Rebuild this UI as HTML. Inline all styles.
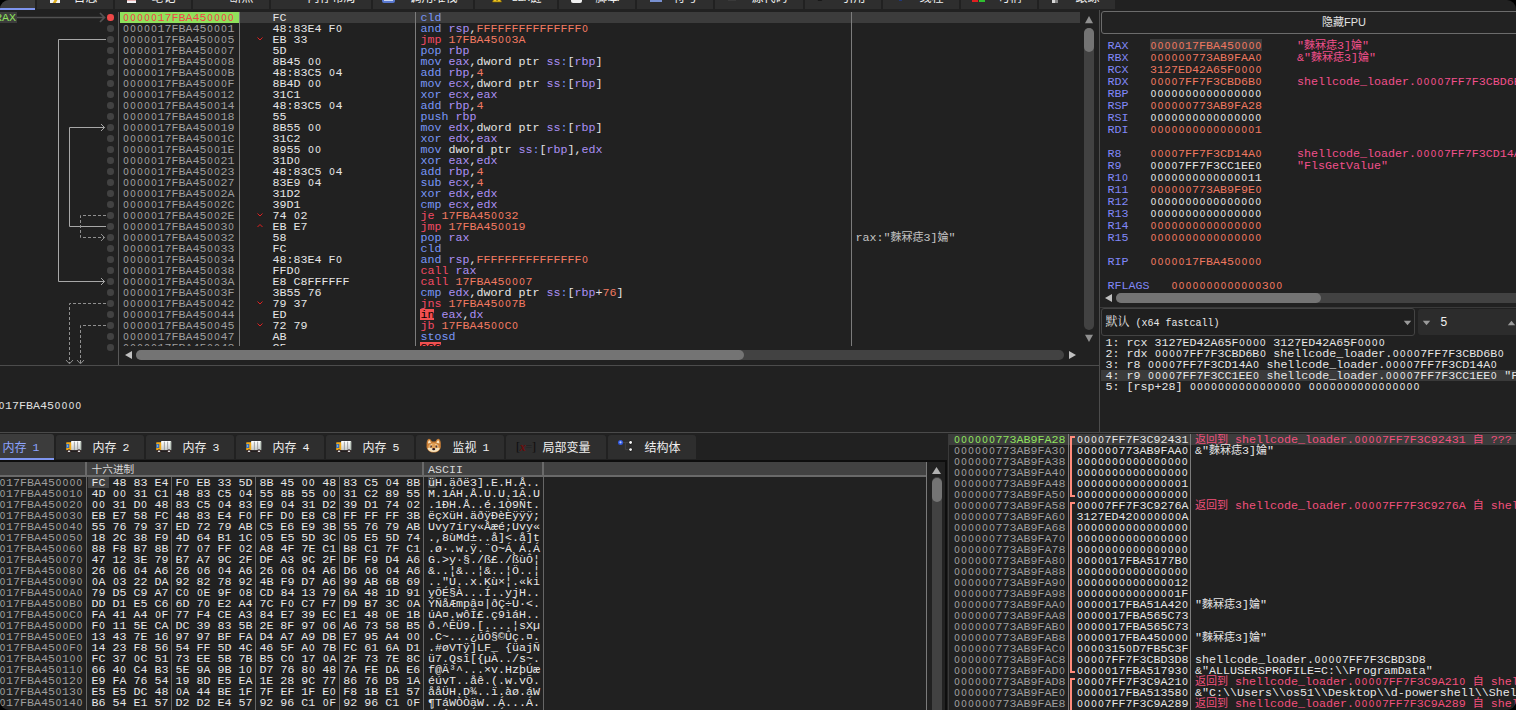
<!DOCTYPE html>
<html lang="zh"><head><meta charset="utf-8"><title>x64dbg</title>
<style>
html,body{margin:0;padding:0;background:#000;}
body{width:1516px;height:710px;overflow:hidden;position:relative;}
#w{position:absolute;left:0;top:0;width:1516px;height:710px;background:#212121;border-radius:9px;overflow:hidden;
 font-family:"Liberation Mono","Noto Sans CJK SC",monospace;font-size:11.667px;line-height:11px;color:#e0e0e0;}
.p{position:absolute;overflow:hidden;}
.t{position:absolute;white-space:pre;height:11px;line-height:11px;}
.r{position:absolute;}
.cj{font-family:"Noto Sans CJK SC",sans-serif;font-size:11px;line-height:0;}
.ui{font-family:"Liberation Sans","Noto Sans CJK SC",sans-serif;font-size:12px;}
.z{font-family:"DejaVu Sans",sans-serif;font-weight:normal;font-size:9.4px;letter-spacing:1.02px;line-height:0;position:relative;left:0.5px;}
.ad{color:#9e9e9e;}
.by{color:#e6e6e6;}
.m{color:#7896f6;} .g{color:#ab90f4;} .c{color:#f27a62;} .j{color:#f24a64;} .w{color:#e4e4e4;}
.bad{color:#000;}
.rn{color:#8088f8;} .rc{color:#f07860;} .ru{color:#e4e4e4;} .rk{color:#f2508c;}
.sk{color:#f2507c;}
.tl{font-family:"Liberation Mono",monospace;font-size:11.5px;letter-spacing:-0.9px;position:relative;top:-1px;}
.tab{position:absolute;background:#2e2e2e;border-radius:3px 3px 0 0;}
</style></head>
<body><div id="w">
<div class="tab" style="left:-60px;top:-16px;width:95px;height:25px;background:#3c3c3c;"></div>
<div class="r" style="left:-60px;top:8px;width:95px;height:2px;background:#7f96f0;"></div>
<div class="tab" style="left:37px;top:-16px;width:76px;height:25px;background:#2e2e2e;"></div>
<div class="t ui" style="left:73.5px;top:-9px;height:14px;line-height:14px;color:#f0f0f0;">日志</div>
<div class="r" style="left:50px;top:-10px;width:10px;height:13px;background:#f4f4f4;"></div>
<div class="r" style="left:54px;top:-1px;width:3px;height:3.5px;background:#e0b020;transform:skewX(-30deg);"></div>
<div class="tab" style="left:115px;top:-16px;width:76px;height:25px;background:#2e2e2e;"></div>
<div class="t ui" style="left:151.5px;top:-9px;height:14px;line-height:14px;color:#f0f0f0;">笔记</div>
<div class="r" style="left:127px;top:-10px;width:9px;height:12.5px;background:#f0f0f4;"></div>
<div class="r" style="left:127px;top:0px;width:9px;height:1px;background:#e8b0b0;"></div>
<div class="tab" style="left:193px;top:-16px;width:76px;height:25px;background:#2e2e2e;"></div>
<div class="t ui" style="left:229.5px;top:-9px;height:14px;line-height:14px;color:#f0f0f0;">断点</div>
<div class="tab" style="left:271px;top:-16px;width:100px;height:25px;background:#2e2e2e;"></div>
<div class="t ui" style="left:307.5px;top:-9px;height:14px;line-height:14px;color:#f0f0f0;">内存布局</div>
<div class="tab" style="left:373px;top:-16px;width:100px;height:25px;background:#2e2e2e;"></div>
<div class="t ui" style="left:409.5px;top:-9px;height:14px;line-height:14px;color:#f0f0f0;">调用堆栈</div>
<div class="r" style="left:382px;top:-8px;width:13px;height:10.5px;background:#5878d0;border-radius:0 0 2px 2px;"></div>
<div class="r" style="left:384px;top:-6px;width:9px;height:6.5px;background:#c8d4f4;"></div>
<div class="tab" style="left:475px;top:-16px;width:82px;height:25px;background:#2e2e2e;"></div>
<div class="t ui" style="left:511.5px;top:-9px;height:14px;line-height:14px;color:#f0f0f0;"><span class="tl">S</span><span class="tl">E</span><span class="tl">H</span>链</div>
<svg class="r" style="left:491.5px;top:-8px" width="10" height="11"><path d="M5 0.5L9.6 10H0.4Z" fill="#f0c820" stroke="#806000" stroke-width="0.7"/><rect x="4.5" y="3.5" width="1.1" height="3.4" fill="#222"/><rect x="4.5" y="7.6" width="1.1" height="1.1" fill="#222"/></svg>
<div class="tab" style="left:559px;top:-16px;width:76px;height:25px;background:#2e2e2e;"></div>
<div class="t ui" style="left:595.5px;top:-9px;height:14px;line-height:14px;color:#f0f0f0;">脚本</div>
<div class="r" style="left:571px;top:-10px;width:11px;height:12.5px;background:#f0f0f0;border-radius:0 0 2px 2px;"></div>
<div class="tab" style="left:637px;top:-16px;width:76px;height:25px;background:#2e2e2e;"></div>
<div class="t ui" style="left:673.5px;top:-9px;height:14px;line-height:14px;color:#f0f0f0;">符号</div>
<div class="r" style="left:649.5px;top:-9px;width:12px;height:10.5px;background:#e8ecf8;border-radius:0 0 2px 2px;"></div>
<div class="r" style="left:649.5px;top:0px;width:12px;height:1.5px;background:#7890d0;"></div>
<div class="tab" style="left:715px;top:-16px;width:88px;height:25px;background:#2e2e2e;"></div>
<div class="t ui" style="left:751.5px;top:-9px;height:14px;line-height:14px;color:#f0f0f0;">源代码</div>
<div class="r" style="left:728px;top:-8px;width:8px;height:9px;background:#3a3a3a;"></div>
<div class="tab" style="left:805px;top:-16px;width:76px;height:25px;background:#2e2e2e;"></div>
<div class="t ui" style="left:841.5px;top:-9px;height:14px;line-height:14px;color:#f0f0f0;">引用</div>
<div class="r" style="left:816px;top:-6px;width:4px;height:6.5px;background:#181818;transform:skewX(30deg);"></div>
<div class="tab" style="left:883px;top:-16px;width:76px;height:25px;background:#2e2e2e;"></div>
<div class="t ui" style="left:919.5px;top:-9px;height:14px;line-height:14px;color:#f0f0f0;">线程</div>
<div class="r" style="left:899px;top:-6px;width:3px;height:6.5px;background:#203878;"></div>
<div class="tab" style="left:961px;top:-16px;width:76px;height:25px;background:#2e2e2e;"></div>
<div class="t ui" style="left:997.5px;top:-9px;height:14px;line-height:14px;color:#f0f0f0;">句柄</div>
<div class="r" style="left:972px;top:-7px;width:6px;height:8.5px;background:#e02020;"></div>
<div class="r" style="left:979px;top:-7px;width:6px;height:8.5px;background:#30c030;"></div>
<div class="tab" style="left:1039px;top:-16px;width:76px;height:25px;background:#2e2e2e;"></div>
<div class="t ui" style="left:1075.5px;top:-9px;height:14px;line-height:14px;color:#f0f0f0;">跟踪</div>
<div class="r" style="left:1052px;top:-8px;width:3px;height:11px;background:#d8d8d8;"></div>
<div class="r" style="left:1055px;top:-2px;width:3px;height:5px;background:#888;"></div>
<div class="p" style="left:0;top:12px;width:1096px;height:334px;">
<div class="r" style="left:240px;top:0px;width:840px;height:11px;background:#3c3c3c;"></div>
<div class="r" style="left:120px;top:0px;width:119px;height:11px;background:#8fe25c;"></div>
<div class="r" style="left:239px;top:0px;width:1px;height:334px;background:#7c7c7c;"></div>
<div class="r" style="left:415px;top:0px;width:1px;height:334px;background:#7c7c7c;"></div>
<div class="r" style="left:851px;top:0px;width:1px;height:334px;background:#7c7c7c;"></div>
<div class="t " style="left:122.5px;top:1px;color:#f04848;"><b class="z">00000</b>17FBA45<b class="z">0000</b></div>
<div class="t by" style="left:272.5px;top:1px;">FC</div>
<div class="t " style="left:420.5px;top:1px;"><span class="m">cld</span></div>
<div class="t ad" style="left:122.5px;top:12px;"><b class="z">00000</b>17FBA45<b class="z">000</b>1</div>
<div class="t by" style="left:272.5px;top:12px;">48:83E4 F<b class="z">0</b></div>
<div class="t " style="left:420.5px;top:12px;"><span class="m">and </span><span class="g">rsp</span><span class="w">,</span><span class="c">FFFFFFFFFFFFFFF<b class="z">0</b></span></div>
<div class="t ad" style="left:122.5px;top:23px;"><b class="z">00000</b>17FBA45<b class="z">000</b>5</div>
<div class="t by" style="left:272.5px;top:23px;">EB 33</div>
<div class="t " style="left:420.5px;top:23px;"><span class="j">jmp </span><span class="c">17FBA45<b class="z">00</b>3A</span></div>
<svg class="r" style="left:257px;top:24px" width="6" height="6"><polyline points="0.5,1.5 3,4 5.5,1.5" fill="none" stroke="#e02020" stroke-width="1"/></svg>
<div class="t ad" style="left:122.5px;top:34px;"><b class="z">00000</b>17FBA45<b class="z">000</b>7</div>
<div class="t by" style="left:272.5px;top:34px;">5D</div>
<div class="t " style="left:420.5px;top:34px;"><span class="m">pop </span><span class="g">rbp</span></div>
<div class="t ad" style="left:122.5px;top:45px;"><b class="z">00000</b>17FBA45<b class="z">000</b>8</div>
<div class="t by" style="left:272.5px;top:45px;">8B45 <b class="z">00</b></div>
<div class="t " style="left:420.5px;top:45px;"><span class="m">mov </span><span class="g">eax</span><span class="w">,dword ptr </span><span class="g">ss</span><span class="m">:</span><span class="w">[</span><span class="g">rbp</span><span class="w">]</span></div>
<div class="t ad" style="left:122.5px;top:56px;"><b class="z">00000</b>17FBA45<b class="z">000</b>B</div>
<div class="t by" style="left:272.5px;top:56px;">48:83C5 <b class="z">0</b>4</div>
<div class="t " style="left:420.5px;top:56px;"><span class="m">add </span><span class="g">rbp</span><span class="w">,</span><span class="c">4</span></div>
<div class="t ad" style="left:122.5px;top:67px;"><b class="z">00000</b>17FBA45<b class="z">000</b>F</div>
<div class="t by" style="left:272.5px;top:67px;">8B4D <b class="z">00</b></div>
<div class="t " style="left:420.5px;top:67px;"><span class="m">mov </span><span class="g">ecx</span><span class="w">,dword ptr </span><span class="g">ss</span><span class="m">:</span><span class="w">[</span><span class="g">rbp</span><span class="w">]</span></div>
<div class="t ad" style="left:122.5px;top:78px;"><b class="z">00000</b>17FBA45<b class="z">00</b>12</div>
<div class="t by" style="left:272.5px;top:78px;">31C1</div>
<div class="t " style="left:420.5px;top:78px;"><span class="m">xor </span><span class="g">ecx</span><span class="w">,</span><span class="g">eax</span></div>
<div class="t ad" style="left:122.5px;top:89px;"><b class="z">00000</b>17FBA45<b class="z">00</b>14</div>
<div class="t by" style="left:272.5px;top:89px;">48:83C5 <b class="z">0</b>4</div>
<div class="t " style="left:420.5px;top:89px;"><span class="m">add </span><span class="g">rbp</span><span class="w">,</span><span class="c">4</span></div>
<div class="t ad" style="left:122.5px;top:100px;"><b class="z">00000</b>17FBA45<b class="z">00</b>18</div>
<div class="t by" style="left:272.5px;top:100px;">55</div>
<div class="t " style="left:420.5px;top:100px;"><span class="m">push </span><span class="g">rbp</span></div>
<div class="t ad" style="left:122.5px;top:111px;"><b class="z">00000</b>17FBA45<b class="z">00</b>19</div>
<div class="t by" style="left:272.5px;top:111px;">8B55 <b class="z">00</b></div>
<div class="t " style="left:420.5px;top:111px;"><span class="m">mov </span><span class="g">edx</span><span class="w">,dword ptr </span><span class="g">ss</span><span class="m">:</span><span class="w">[</span><span class="g">rbp</span><span class="w">]</span></div>
<div class="t ad" style="left:122.5px;top:122px;"><b class="z">00000</b>17FBA45<b class="z">00</b>1C</div>
<div class="t by" style="left:272.5px;top:122px;">31C2</div>
<div class="t " style="left:420.5px;top:122px;"><span class="m">xor </span><span class="g">edx</span><span class="w">,</span><span class="g">eax</span></div>
<div class="t ad" style="left:122.5px;top:133px;"><b class="z">00000</b>17FBA45<b class="z">00</b>1E</div>
<div class="t by" style="left:272.5px;top:133px;">8955 <b class="z">00</b></div>
<div class="t " style="left:420.5px;top:133px;"><span class="m">mov </span><span class="w">dword ptr </span><span class="g">ss</span><span class="m">:</span><span class="w">[</span><span class="g">rbp</span><span class="w">],</span><span class="g">edx</span></div>
<div class="t ad" style="left:122.5px;top:144px;"><b class="z">00000</b>17FBA45<b class="z">00</b>21</div>
<div class="t by" style="left:272.5px;top:144px;">31D<b class="z">0</b></div>
<div class="t " style="left:420.5px;top:144px;"><span class="m">xor </span><span class="g">eax</span><span class="w">,</span><span class="g">edx</span></div>
<div class="t ad" style="left:122.5px;top:155px;"><b class="z">00000</b>17FBA45<b class="z">00</b>23</div>
<div class="t by" style="left:272.5px;top:155px;">48:83C5 <b class="z">0</b>4</div>
<div class="t " style="left:420.5px;top:155px;"><span class="m">add </span><span class="g">rbp</span><span class="w">,</span><span class="c">4</span></div>
<div class="t ad" style="left:122.5px;top:166px;"><b class="z">00000</b>17FBA45<b class="z">00</b>27</div>
<div class="t by" style="left:272.5px;top:166px;">83E9 <b class="z">0</b>4</div>
<div class="t " style="left:420.5px;top:166px;"><span class="m">sub </span><span class="g">ecx</span><span class="w">,</span><span class="c">4</span></div>
<div class="t ad" style="left:122.5px;top:177px;"><b class="z">00000</b>17FBA45<b class="z">00</b>2A</div>
<div class="t by" style="left:272.5px;top:177px;">31D2</div>
<div class="t " style="left:420.5px;top:177px;"><span class="m">xor </span><span class="g">edx</span><span class="w">,</span><span class="g">edx</span></div>
<div class="t ad" style="left:122.5px;top:188px;"><b class="z">00000</b>17FBA45<b class="z">00</b>2C</div>
<div class="t by" style="left:272.5px;top:188px;">39D1</div>
<div class="t " style="left:420.5px;top:188px;"><span class="m">cmp </span><span class="g">ecx</span><span class="w">,</span><span class="g">edx</span></div>
<div class="t ad" style="left:122.5px;top:199px;"><b class="z">00000</b>17FBA45<b class="z">00</b>2E</div>
<div class="t by" style="left:272.5px;top:199px;">74 <b class="z">0</b>2</div>
<div class="t " style="left:420.5px;top:199px;"><span class="j">je </span><span class="c">17FBA45<b class="z">00</b>32</span></div>
<svg class="r" style="left:257px;top:200px" width="6" height="6"><polyline points="0.5,1.5 3,4 5.5,1.5" fill="none" stroke="#e02020" stroke-width="1"/></svg>
<div class="t ad" style="left:122.5px;top:210px;"><b class="z">00000</b>17FBA45<b class="z">00</b>3<b class="z">0</b></div>
<div class="t by" style="left:272.5px;top:210px;">EB E7</div>
<div class="t " style="left:420.5px;top:210px;"><span class="j">jmp </span><span class="c">17FBA45<b class="z">00</b>19</span></div>
<svg class="r" style="left:257px;top:211px" width="6" height="6"><polyline points="0.5,4 3,1.5 5.5,4" fill="none" stroke="#e02020" stroke-width="1"/></svg>
<div class="t ad" style="left:122.5px;top:221px;"><b class="z">00000</b>17FBA45<b class="z">00</b>32</div>
<div class="t by" style="left:272.5px;top:221px;">58</div>
<div class="t " style="left:420.5px;top:221px;"><span class="m">pop </span><span class="g">rax</span></div>
<div class="t ad" style="left:122.5px;top:232px;"><b class="z">00000</b>17FBA45<b class="z">00</b>33</div>
<div class="t by" style="left:272.5px;top:232px;">FC</div>
<div class="t " style="left:420.5px;top:232px;"><span class="m">cld</span></div>
<div class="t ad" style="left:122.5px;top:243px;"><b class="z">00000</b>17FBA45<b class="z">00</b>34</div>
<div class="t by" style="left:272.5px;top:243px;">48:83E4 F<b class="z">0</b></div>
<div class="t " style="left:420.5px;top:243px;"><span class="m">and </span><span class="g">rsp</span><span class="w">,</span><span class="c">FFFFFFFFFFFFFFF<b class="z">0</b></span></div>
<div class="t ad" style="left:122.5px;top:254px;"><b class="z">00000</b>17FBA45<b class="z">00</b>38</div>
<div class="t by" style="left:272.5px;top:254px;">FFD<b class="z">0</b></div>
<div class="t " style="left:420.5px;top:254px;"><span class="j">call </span><span class="g">rax</span></div>
<div class="t ad" style="left:122.5px;top:265px;"><b class="z">00000</b>17FBA45<b class="z">00</b>3A</div>
<div class="t by" style="left:272.5px;top:265px;">E8 C8FFFFFF</div>
<div class="t " style="left:420.5px;top:265px;"><span class="j">call </span><span class="c">17FBA45<b class="z">000</b>7</span></div>
<div class="t ad" style="left:122.5px;top:276px;"><b class="z">00000</b>17FBA45<b class="z">00</b>3F</div>
<div class="t by" style="left:272.5px;top:276px;">3B55 76</div>
<div class="t " style="left:420.5px;top:276px;"><span class="m">cmp </span><span class="g">edx</span><span class="w">,dword ptr </span><span class="g">ss</span><span class="m">:</span><span class="w">[</span><span class="g">rbp</span><span class="w">+</span><span class="c">76</span><span class="w">]</span></div>
<div class="t ad" style="left:122.5px;top:287px;"><b class="z">00000</b>17FBA45<b class="z">00</b>42</div>
<div class="t by" style="left:272.5px;top:287px;">79 37</div>
<div class="t " style="left:420.5px;top:287px;"><span class="j">jns </span><span class="c">17FBA45<b class="z">00</b>7B</span></div>
<svg class="r" style="left:257px;top:288px" width="6" height="6"><polyline points="0.5,1.5 3,4 5.5,1.5" fill="none" stroke="#e02020" stroke-width="1"/></svg>
<div class="t ad" style="left:122.5px;top:298px;"><b class="z">00000</b>17FBA45<b class="z">00</b>44</div>
<div class="t by" style="left:272.5px;top:298px;">ED</div>
<div class="r" style="left:420px;top:297px;width:14px;height:11px;background:#f05050;"></div>
<div class="t " style="left:420.5px;top:298px;"><span class="bad">in</span><span class="w"> </span><span class="g">eax</span><span class="w">,</span><span class="g">dx</span></div>
<div class="t ad" style="left:122.5px;top:309px;"><b class="z">00000</b>17FBA45<b class="z">00</b>45</div>
<div class="t by" style="left:272.5px;top:309px;">72 79</div>
<div class="t " style="left:420.5px;top:309px;"><span class="j">jb </span><span class="c">17FBA45<b class="z">00</b>C<b class="z">0</b></span></div>
<svg class="r" style="left:257px;top:310px" width="6" height="6"><polyline points="0.5,1.5 3,4 5.5,1.5" fill="none" stroke="#e02020" stroke-width="1"/></svg>
<div class="t ad" style="left:122.5px;top:320px;"><b class="z">00000</b>17FBA45<b class="z">00</b>47</div>
<div class="t by" style="left:272.5px;top:320px;">AB</div>
<div class="t " style="left:420.5px;top:320px;"><span class="m">stosd</span></div>
<div class="t ad" style="left:122.5px;top:331px;"><b class="z">00000</b>17FBA45<b class="z">00</b>48</div>
<div class="t by" style="left:272.5px;top:331px;">C5</div>
<div class="r" style="left:420px;top:330px;width:21px;height:11px;background:#f05050;"></div>
<div class="t " style="left:420.5px;top:331px;"><span class="bad">???</span></div>
<div class="t " style="left:855.5px;top:221px;color:#c4c4c4;">rax:"<span class="cj">麳冧痣</span>3]<span class="cj">婨</span>"</div>
</div>
<div class="p" style="left:0;top:12px;width:119px;height:353px;"><div class="r" style="left:107.25px;top:2.25px;width:6.5px;height:6.5px;border-radius:50%;background:#f04848;"></div><div class="r" style="left:107.25px;top:13.25px;width:6.5px;height:6.5px;border-radius:50%;background:#424242;"></div><div class="r" style="left:107.25px;top:24.25px;width:6.5px;height:6.5px;border-radius:50%;background:#424242;"></div><div class="r" style="left:107.25px;top:35.25px;width:6.5px;height:6.5px;border-radius:50%;background:#424242;"></div><div class="r" style="left:107.25px;top:46.25px;width:6.5px;height:6.5px;border-radius:50%;background:#424242;"></div><div class="r" style="left:107.25px;top:57.25px;width:6.5px;height:6.5px;border-radius:50%;background:#424242;"></div><div class="r" style="left:107.25px;top:68.25px;width:6.5px;height:6.5px;border-radius:50%;background:#424242;"></div><div class="r" style="left:107.25px;top:79.25px;width:6.5px;height:6.5px;border-radius:50%;background:#424242;"></div><div class="r" style="left:107.25px;top:90.25px;width:6.5px;height:6.5px;border-radius:50%;background:#424242;"></div><div class="r" style="left:107.25px;top:101.25px;width:6.5px;height:6.5px;border-radius:50%;background:#424242;"></div><div class="r" style="left:107.25px;top:112.25px;width:6.5px;height:6.5px;border-radius:50%;background:#424242;"></div><div class="r" style="left:107.25px;top:123.25px;width:6.5px;height:6.5px;border-radius:50%;background:#424242;"></div><div class="r" style="left:107.25px;top:134.25px;width:6.5px;height:6.5px;border-radius:50%;background:#424242;"></div><div class="r" style="left:107.25px;top:145.25px;width:6.5px;height:6.5px;border-radius:50%;background:#424242;"></div><div class="r" style="left:107.25px;top:156.25px;width:6.5px;height:6.5px;border-radius:50%;background:#424242;"></div><div class="r" style="left:107.25px;top:167.25px;width:6.5px;height:6.5px;border-radius:50%;background:#424242;"></div><div class="r" style="left:107.25px;top:178.25px;width:6.5px;height:6.5px;border-radius:50%;background:#424242;"></div><div class="r" style="left:107.25px;top:189.25px;width:6.5px;height:6.5px;border-radius:50%;background:#424242;"></div><div class="r" style="left:107.25px;top:200.25px;width:6.5px;height:6.5px;border-radius:50%;background:#424242;"></div><div class="r" style="left:107.25px;top:211.25px;width:6.5px;height:6.5px;border-radius:50%;background:#424242;"></div><div class="r" style="left:107.25px;top:222.25px;width:6.5px;height:6.5px;border-radius:50%;background:#424242;"></div><div class="r" style="left:107.25px;top:233.25px;width:6.5px;height:6.5px;border-radius:50%;background:#424242;"></div><div class="r" style="left:107.25px;top:244.25px;width:6.5px;height:6.5px;border-radius:50%;background:#424242;"></div><div class="r" style="left:107.25px;top:255.25px;width:6.5px;height:6.5px;border-radius:50%;background:#424242;"></div><div class="r" style="left:107.25px;top:266.25px;width:6.5px;height:6.5px;border-radius:50%;background:#424242;"></div><div class="r" style="left:107.25px;top:277.25px;width:6.5px;height:6.5px;border-radius:50%;background:#424242;"></div><div class="r" style="left:107.25px;top:288.25px;width:6.5px;height:6.5px;border-radius:50%;background:#424242;"></div><div class="r" style="left:107.25px;top:299.25px;width:6.5px;height:6.5px;border-radius:50%;background:#424242;"></div><div class="r" style="left:107.25px;top:310.25px;width:6.5px;height:6.5px;border-radius:50%;background:#424242;"></div><div class="r" style="left:107.25px;top:321.25px;width:6.5px;height:6.5px;border-radius:50%;background:#424242;"></div><div class="r" style="left:107.25px;top:332.25px;width:6.5px;height:6.5px;border-radius:50%;background:#424242;"></div><div class="r" style="left:118px;top:0;width:1px;height:353px;background:#585858;"></div></div>
<div class="r" style="left:0px;top:12px;width:17px;height:11px;background:#3c3c3c;"></div>
<div class="t " style="left:-5px;top:12.5px;color:#8fe25c;font-family:"Liberation Sans",sans-serif;font-size:11.5px;">RAX</div>
<svg class="r" style="left:0;top:12px" width="118" height="354" fill="none" stroke-width="1"><path d="M17 5.5H104.5M100 1l4.5 4.5l-4.5 4.5" stroke="#525252" stroke-width="1.7"/><path d="M106 27.5H58.5V269.5H104.5M101 266.0l3.5 3.5l-3.5 3.5" stroke="#a8a8a8"/><path d="M106 214.5H69.5V115.5H104.5M101 112.0l3.5 3.5l-3.5 3.5" stroke="#a8a8a8"/><path d="M106 203.5H80.5V225.5H104.5" stroke="#909090" stroke-dasharray="3 2"/><path d="M101 222.0l3.5 3.5l-3.5 3.5" stroke="#909090"/><path d="M106 291.5H69.5V351" stroke="#909090" stroke-dasharray="3 2"/><path d="M66 348l3.5 3.8l3.5-3.8" stroke="#909090"/><path d="M106 313.5H80.5V351" stroke="#909090" stroke-dasharray="3 2"/><path d="M77 348l3.5 3.8l3.5-3.8" stroke="#909090"/></svg>
<div class="r" style="left:1084px;top:28px;width:10px;height:302px;background:#424242;border-radius:5px;"></div>
<div class="r" style="left:1084px;top:28px;width:10px;height:24px;background:#747474;border-radius:5px;"></div>
<svg class="r" style="left:1084px;top:15px" width="10" height="9"><path d="M1 8.2L5 1L9 8.2Z" fill="#909090"/></svg>
<svg class="r" style="left:1084px;top:334px" width="10" height="9"><path d="M1 0.8L5 8L9 0.8Z" fill="#909090"/></svg>
<div class="r" style="left:136px;top:350px;width:928px;height:10px;background:#424242;border-radius:5px;"></div>
<div class="r" style="left:136px;top:350px;width:608px;height:10px;background:#747474;border-radius:5px;"></div>
<svg class="r" style="left:124px;top:350px" width="9" height="10"><path d="M8 1L1 5L8 9Z" fill="#c0c0c0"/></svg>
<svg class="r" style="left:1068px;top:350px" width="9" height="10"><path d="M1 1L8 5L1 9Z" fill="#c0c0c0"/></svg>
<div class="r" style="left:0px;top:365px;width:1099px;height:1px;background:#4c4c4c;"></div>
<div class="r" style="left:1099px;top:10px;width:1px;height:423px;background:#4c4c4c;"></div>
<div class="t " style="left:-30px;top:401px;color:#e0e0e0;"><b class="z">00000</b>17FBA45<b class="z">0000</b></div>
<div class="p" style="left:1100px;top:10px;width:416px;height:296px;">
<div class="r" style="left:1px;top:1px;width:484px;height:21px;border:1px solid #6c6c6c;border-radius:3px;background:#222;"></div>
<div class="t ui" style="left:1px;top:2px;width:486px;height:21px;line-height:21px;text-align:center;color:#e4e4e4;font-size:11px;">隐藏FPU</div>
<div class="r" style="left:50px;top:29px;width:112px;height:12px;background:#3c3c3c;"></div>
<div class="t rn" style="left:7.5px;top:31px;">RAX</div>
<div class="t rc" style="left:50px;top:31px;"><b class="z">00000</b>17FBA45<b class="z">0000</b></div>
<div class="t rk" style="left:197px;top:31px;">"<span class="cj">麳</span><span class="cj">冧</span><span class="cj">痣</span>3]<span class="cj">婨</span>"</div>
<div class="t rn" style="left:7.5px;top:43px;">RBX</div>
<div class="t rc" style="left:50px;top:43px;"><b class="z">000000</b>773AB9FAA<b class="z">0</b></div>
<div class="t rk" style="left:197px;top:43px;">&amp;"<span class="cj">麳</span><span class="cj">冧</span><span class="cj">痣</span>3]<span class="cj">婨</span>"</div>
<div class="t rn" style="left:7.5px;top:55px;">RCX</div>
<div class="t rc" style="left:50px;top:55px;">3127ED42A65F<b class="z">0000</b></div>
<div class="t rn" style="left:7.5px;top:67px;">RDX</div>
<div class="t rc" style="left:50px;top:67px;"><b class="z">0000</b>7FF7F3CBD6B<b class="z">0</b></div>
<div class="t rk" style="left:197px;top:67px;">shellcode_loader.<b class="z">0000</b>7FF7F3CBD6B<b class="z">0</b></div>
<div class="t rn" style="left:7.5px;top:79px;">RBP</div>
<div class="t ru" style="left:50px;top:79px;"><b class="z">0000000000000000</b></div>
<div class="t rn" style="left:7.5px;top:91px;">RSP</div>
<div class="t rc" style="left:50px;top:91px;"><b class="z">000000</b>773AB9FA28</div>
<div class="t rn" style="left:7.5px;top:103px;">RSI</div>
<div class="t ru" style="left:50px;top:103px;"><b class="z">0000000000000000</b></div>
<div class="t rn" style="left:7.5px;top:115px;">RDI</div>
<div class="t rc" style="left:50px;top:115px;"><b class="z">000000000000000</b>1</div>
<div class="t rn" style="left:7.5px;top:139px;">R8</div>
<div class="t rc" style="left:50px;top:139px;"><b class="z">0000</b>7FF7F3CD14A<b class="z">0</b></div>
<div class="t rk" style="left:197px;top:139px;">shellcode_loader.<b class="z">0000</b>7FF7F3CD14A<b class="z">0</b></div>
<div class="t rn" style="left:7.5px;top:151px;">R9</div>
<div class="t ru" style="left:50px;top:151px;"><b class="z">0000</b>7FF7F3CC1EE<b class="z">0</b></div>
<div class="t rk" style="left:197px;top:151px;">"FlsGetValue"</div>
<div class="t rn" style="left:7.5px;top:163px;">R1<b class="z">0</b></div>
<div class="t ru" style="left:50px;top:163px;"><b class="z">00000000000000</b>11</div>
<div class="t rn" style="left:7.5px;top:175px;">R11</div>
<div class="t rc" style="left:50px;top:175px;"><b class="z">000000</b>773AB9F9E<b class="z">0</b></div>
<div class="t rn" style="left:7.5px;top:187px;">R12</div>
<div class="t ru" style="left:50px;top:187px;"><b class="z">0000000000000000</b></div>
<div class="t rn" style="left:7.5px;top:199px;">R13</div>
<div class="t ru" style="left:50px;top:199px;"><b class="z">0000000000000000</b></div>
<div class="t rn" style="left:7.5px;top:211px;">R14</div>
<div class="t rc" style="left:50px;top:211px;"><b class="z">0000000000000000</b></div>
<div class="t rn" style="left:7.5px;top:223px;">R15</div>
<div class="t rc" style="left:50px;top:223px;"><b class="z">0000000000000000</b></div>
<div class="t rn" style="left:7.5px;top:247px;">RIP</div>
<div class="t rc" style="left:50px;top:247px;"><b class="z">00000</b>17FBA45<b class="z">0000</b></div>
<div class="t rn" style="left:7.5px;top:271px;">RFLAGS</div>
<div class="t rc" style="left:71px;top:271px;"><b class="z">0000000000000</b>3<b class="z">00</b></div>
<div class="r" style="left:16px;top:283px;width:420px;height:10px;background:#424242;border-radius:5px;"></div>
<div class="r" style="left:16px;top:283px;width:205px;height:10px;background:#747474;border-radius:5px;"></div>
<svg class="r" style="left:4px;top:283px" width="9" height="10"><path d="M8 1L1 5L8 9Z" fill="#c0c0c0"/></svg>
</div>
<div class="p" style="left:1100px;top:306px;width:416px;height:127px;">
<div class="r" style="left:0px;top:1px;width:416px;height:1px;background:#3a3a3a;"></div>
<div class="r" style="left:1px;top:2px;width:314px;height:28px;border:1px solid #444;border-radius:3px;background:#1f1f1f;box-sizing:border-box;"></div>
<div class="t" style="left:5.5px;top:9.5px;height:14px;line-height:14px;color:#e8e8e8;font-family:'Liberation Mono','Noto Serif CJK SC',serif;"><span style="font-size:12px">默认</span><span style="font-size:10px"> (x64 fastcall)</span></div>
<svg class="r" style="left:302.5px;top:13.5px" width="9" height="6"><path d="M0.8 0.8H8.2L4.5 5.2Z" fill="#9a9a9a"/></svg>
<div class="r" style="left:318px;top:3px;width:120px;height:26px;border-radius:3px;background:#2c2c2c;"></div>
<svg class="r" style="left:322.2px;top:13.5px" width="9" height="6"><path d="M0.8 0.8H8.2L4.5 5.2Z" fill="#9a9a9a"/></svg>
<svg class="r" style="left:407.2px;top:13.5px" width="9" height="6"><path d="M0.8 5.2H8.2L4.5 0.8Z" fill="#9a9a9a"/></svg>
<div class="t ui" style="left:340.5px;top:9px;height:14px;line-height:14px;font-size:12px;color:#f0f0f0;">5</div>
<div class="r" style="left:1px;top:64px;width:415px;height:11px;background:#3a3a3a;"></div>
<div class="t " style="left:5.5px;top:32px;color:#e6e6e6;">1: rcx 3127ED42A65F<b class="z">0000</b> 3127ED42A65F<b class="z">0000</b></div>
<div class="t " style="left:5.5px;top:43px;color:#e6e6e6;">2: rdx <b class="z">0000</b>7FF7F3CBD6B<b class="z">0</b> shellcode_loader.<b class="z">0000</b>7FF7F3CBD6B<b class="z">0</b></div>
<div class="t " style="left:5.5px;top:54px;color:#e6e6e6;">3: r8 <b class="z">0000</b>7FF7F3CD14A<b class="z">0</b> shellcode_loader.<b class="z">0000</b>7FF7F3CD14A<b class="z">0</b></div>
<div class="t " style="left:5.5px;top:65px;color:#e6e6e6;">4: r9 <b class="z">0000</b>7FF7F3CC1EE<b class="z">0</b> shellcode_loader.<b class="z">0000</b>7FF7F3CC1EE<b class="z">0</b> "FlsGetValue"</div>
<div class="t " style="left:5.5px;top:76px;color:#e6e6e6;">5: [rsp+28] <b class="z">0000000000000000</b> <b class="z">0000000000000000</b></div>
</div>
<div class="r" style="left:0px;top:432px;width:1516px;height:1px;background:#4a4a4a;"></div>
<div class="p" style="left:0;top:434px;width:948px;height:276px;">
<div class="tab" style="left:0px;top:0;width:54px;height:26px;background:#3c3c3c;border-radius:0 3px 0 0;"></div>
<div class="r" style="left:0px;top:23.5px;width:54px;height:2.5px;background:#7f96f0;"></div>
<div class="t ui" style="left:2.5px;top:6.5px;height:14px;line-height:14px;color:#8ca4ff;">内存<span class="tl"> </span><span class="tl">1</span></div>
<div class="tab" style="left:56px;top:0.5px;width:88px;height:24px;"></div>
<svg class="r" style="left:66px;top:5.6px" width="16" height="14" viewBox="0 0 16 14"><defs><linearGradient id="tg" x1="0" y1="0" x2="0" y2="1"><stop offset="0" stop-color="#ffffff"/><stop offset="1" stop-color="#c4c8c8"/></linearGradient></defs><rect x="5" y="1" width="10.3" height="9.6" rx="0.8" fill="url(#tg)"/><rect x="7.9" y="1.6" width="0.9" height="8.6" fill="#9c9c9c"/><rect x="11.2" y="1.6" width="0.9" height="8.6" fill="#9c9c9c"/><rect x="14.2" y="1.6" width="0.7" height="8.6" fill="#a8b8a8"/><rect x="0.2" y="2.2" width="5" height="8" rx="0.6" fill="#f0a818"/><rect x="0.2" y="4" width="3" height="4" fill="#2868b8"/><rect x="1.2" y="4.6" width="1" height="2.6" fill="#90b8e8"/><rect x="1" y="10.3" width="14" height="1.2" fill="#181010"/><circle cx="3" cy="11.3" r="1.5" fill="#e4e4e4" stroke="#201010" stroke-width="0.9"/><circle cx="13" cy="11.3" r="1.5" fill="#e4e4e4" stroke="#201010" stroke-width="0.9"/></svg>
<div class="t ui" style="left:92.5px;top:6.5px;height:14px;line-height:14px;color:#f0f0f0;">内存<span class="tl"> </span><span class="tl">2</span></div>
<div class="tab" style="left:146px;top:0.5px;width:88px;height:24px;"></div>
<svg class="r" style="left:156px;top:5.6px" width="16" height="14" viewBox="0 0 16 14"><defs><linearGradient id="tg" x1="0" y1="0" x2="0" y2="1"><stop offset="0" stop-color="#ffffff"/><stop offset="1" stop-color="#c4c8c8"/></linearGradient></defs><rect x="5" y="1" width="10.3" height="9.6" rx="0.8" fill="url(#tg)"/><rect x="7.9" y="1.6" width="0.9" height="8.6" fill="#9c9c9c"/><rect x="11.2" y="1.6" width="0.9" height="8.6" fill="#9c9c9c"/><rect x="14.2" y="1.6" width="0.7" height="8.6" fill="#a8b8a8"/><rect x="0.2" y="2.2" width="5" height="8" rx="0.6" fill="#f0a818"/><rect x="0.2" y="4" width="3" height="4" fill="#2868b8"/><rect x="1.2" y="4.6" width="1" height="2.6" fill="#90b8e8"/><rect x="1" y="10.3" width="14" height="1.2" fill="#181010"/><circle cx="3" cy="11.3" r="1.5" fill="#e4e4e4" stroke="#201010" stroke-width="0.9"/><circle cx="13" cy="11.3" r="1.5" fill="#e4e4e4" stroke="#201010" stroke-width="0.9"/></svg>
<div class="t ui" style="left:182.5px;top:6.5px;height:14px;line-height:14px;color:#f0f0f0;">内存<span class="tl"> </span><span class="tl">3</span></div>
<div class="tab" style="left:236px;top:0.5px;width:88px;height:24px;"></div>
<svg class="r" style="left:246px;top:5.6px" width="16" height="14" viewBox="0 0 16 14"><defs><linearGradient id="tg" x1="0" y1="0" x2="0" y2="1"><stop offset="0" stop-color="#ffffff"/><stop offset="1" stop-color="#c4c8c8"/></linearGradient></defs><rect x="5" y="1" width="10.3" height="9.6" rx="0.8" fill="url(#tg)"/><rect x="7.9" y="1.6" width="0.9" height="8.6" fill="#9c9c9c"/><rect x="11.2" y="1.6" width="0.9" height="8.6" fill="#9c9c9c"/><rect x="14.2" y="1.6" width="0.7" height="8.6" fill="#a8b8a8"/><rect x="0.2" y="2.2" width="5" height="8" rx="0.6" fill="#f0a818"/><rect x="0.2" y="4" width="3" height="4" fill="#2868b8"/><rect x="1.2" y="4.6" width="1" height="2.6" fill="#90b8e8"/><rect x="1" y="10.3" width="14" height="1.2" fill="#181010"/><circle cx="3" cy="11.3" r="1.5" fill="#e4e4e4" stroke="#201010" stroke-width="0.9"/><circle cx="13" cy="11.3" r="1.5" fill="#e4e4e4" stroke="#201010" stroke-width="0.9"/></svg>
<div class="t ui" style="left:272.5px;top:6.5px;height:14px;line-height:14px;color:#f0f0f0;">内存<span class="tl"> </span><span class="tl">4</span></div>
<div class="tab" style="left:326px;top:0.5px;width:88px;height:24px;"></div>
<svg class="r" style="left:336px;top:5.6px" width="16" height="14" viewBox="0 0 16 14"><defs><linearGradient id="tg" x1="0" y1="0" x2="0" y2="1"><stop offset="0" stop-color="#ffffff"/><stop offset="1" stop-color="#c4c8c8"/></linearGradient></defs><rect x="5" y="1" width="10.3" height="9.6" rx="0.8" fill="url(#tg)"/><rect x="7.9" y="1.6" width="0.9" height="8.6" fill="#9c9c9c"/><rect x="11.2" y="1.6" width="0.9" height="8.6" fill="#9c9c9c"/><rect x="14.2" y="1.6" width="0.7" height="8.6" fill="#a8b8a8"/><rect x="0.2" y="2.2" width="5" height="8" rx="0.6" fill="#f0a818"/><rect x="0.2" y="4" width="3" height="4" fill="#2868b8"/><rect x="1.2" y="4.6" width="1" height="2.6" fill="#90b8e8"/><rect x="1" y="10.3" width="14" height="1.2" fill="#181010"/><circle cx="3" cy="11.3" r="1.5" fill="#e4e4e4" stroke="#201010" stroke-width="0.9"/><circle cx="13" cy="11.3" r="1.5" fill="#e4e4e4" stroke="#201010" stroke-width="0.9"/></svg>
<div class="t ui" style="left:362.5px;top:6.5px;height:14px;line-height:14px;color:#f0f0f0;">内存<span class="tl"> </span><span class="tl">5</span></div>
<div class="tab" style="left:416px;top:0.5px;width:88px;height:24px;"></div>
<svg class="r" style="left:426px;top:3.8px" width="16" height="16" viewBox="0 0 16 16"><path d="M0.6 7.5C0.3 4 1.2 1.2 2.8 0.8C4 0.6 5 2 6 3.4H9.4C10.4 2 11.4 0.6 12.6 0.8C14.2 1.2 15.1 4 14.8 7.5C15.4 11 12.5 14.6 7.7 14.6C2.9 14.6 0 11 0.6 7.5Z" fill="#c87e36"/><path d="M2 5.5C2 3.5 2.6 2.2 3.3 2.2C4 2.4 4.6 3.6 5 4.8ZM13.4 5.5C13.4 3.5 12.8 2.2 12.1 2.2C11.4 2.4 10.8 3.6 10.4 4.8Z" fill="#f8e4c0"/><ellipse cx="7.7" cy="8.6" rx="5.4" ry="3.6" fill="#e0a058"/><path d="M1.6 10C3 9.4 5.4 10.4 7.7 10.4C10 10.4 12.4 9.4 13.8 10C13.4 12.6 11 14 7.7 14C4.4 14 2 12.6 1.6 10Z" fill="#f6e2bc"/><ellipse cx="4.9" cy="8.4" rx="0.9" ry="1" fill="#281420"/><ellipse cx="10.5" cy="8.4" rx="0.9" ry="1" fill="#281420"/><rect x="3.8" y="7.6" width="0.9" height="0.9" fill="#fff"/><rect x="10.7" y="7.6" width="0.9" height="0.9" fill="#fff"/><ellipse cx="7.7" cy="11.2" rx="1.5" ry="1.1" fill="#281420"/><rect x="4.8" y="6" width="1.4" height="0.7" fill="#f8e4c0"/><rect x="9.2" y="6" width="1.4" height="0.7" fill="#f8e4c0"/></svg>
<div class="t ui" style="left:452.5px;top:6.5px;height:14px;line-height:14px;color:#f0f0f0;">监视<span class="tl"> </span><span class="tl">1</span></div>
<div class="tab" style="left:506px;top:0.5px;width:100px;height:24px;"></div>
<div class="t" style="left:516px;top:6px;height:14px;line-height:14px;font-family:'Liberation Serif',serif;font-size:12px;color:#0c0c0c;letter-spacing:-0.3px;">[<i style="color:#6c0c0c;font-weight:bold;">x</i><span style="color:#222">=</span>]</div>
<div class="t ui" style="left:542.5px;top:6.5px;height:14px;line-height:14px;color:#f0f0f0;">局部变量</div>
<div class="tab" style="left:608px;top:0.5px;width:88px;height:24px;"></div>
<svg class="r" style="left:618px;top:4px" width="16" height="16" viewBox="0 0 16 16"><path d="M5 4.5H11M7.4 4.5V11.6H11" stroke="#404040" fill="none"/><circle cx="2.5" cy="4.5" r="2.5" fill="#3058e0"/><circle cx="2.5" cy="4.3" r="1.1" fill="#b8c8ff"/><circle cx="12.6" cy="4.5" r="1.9" fill="#101010"/><circle cx="12.6" cy="4.5" r="1.4" fill="#f8f8f8"/><circle cx="12.6" cy="11.6" r="1.9" fill="#101010"/><circle cx="12.6" cy="11.6" r="1.4" fill="#f8f8f8"/></svg>
<div class="t ui" style="left:644.5px;top:6.5px;height:14px;line-height:14px;color:#f0f0f0;">结构体</div>
<div class="r" style="left:0px;top:26px;width:947px;height:2px;background:#0e0e0e;"></div>
<div class="r" style="left:945px;top:26px;width:2px;height:250px;background:#0e0e0e;"></div>
<div class="r" style="left:0px;top:28px;width:927px;height:14px;background:#424242;"></div>
<div class="r" style="left:0px;top:41px;width:927px;height:1.5px;background:#6a6a6a;"></div>
<div class="r" style="left:85px;top:28px;width:2px;height:14px;background:#6a6a6a;"></div>
<div class="r" style="left:422px;top:28px;width:2px;height:14px;background:#6a6a6a;"></div>
<div class="r" style="left:542px;top:28px;width:2px;height:14px;background:#6a6a6a;"></div>
<div class="r" style="left:926px;top:28px;width:1px;height:248px;background:#7a7a7a;"></div>
<div class="t " style="left:91.5px;top:30.5px;color:#d8d8d8;"><span class="cj" style="font-size:10.7px">十六进制</span></div>
<div class="t " style="left:428px;top:30.5px;color:#d8d8d8;">ASCII</div>
<div class="r" style="left:86px;top:43px;width:1px;height:233px;background:#666;"></div>
<div class="r" style="left:171px;top:43px;width:1px;height:233px;background:#666;"></div>
<div class="r" style="left:255px;top:43px;width:1px;height:233px;background:#666;"></div>
<div class="r" style="left:339px;top:43px;width:1px;height:233px;background:#666;"></div>
<div class="r" style="left:423px;top:43px;width:1px;height:233px;background:#666;"></div>
<div class="r" style="left:543px;top:43px;width:1px;height:233px;background:#666;"></div>
<div class="r" style="left:87.5px;top:43px;width:21px;height:11px;background:#404040;"></div>
<div class="r" style="left:427.5px;top:43px;width:8px;height:11px;background:#404040;"></div>
<div class="t ad" style="left:-29px;top:44px;"><b class="z">00000</b>17FBA45<b class="z">0000</b></div>
<div class="t by" style="left:91.5px;top:44px;">FC 48 83 E4 F<b class="z">0</b> EB 33 5D 8B 45 <b class="z">00</b> 48 83 C5 <b class="z">0</b>4 8B</div>
<div class="t by" style="left:428px;top:44px;">üH.äðë3].E.H.Å..</div>
<div class="t ad" style="left:-29px;top:55px;"><b class="z">00000</b>17FBA45<b class="z">00</b>1<b class="z">0</b></div>
<div class="t by" style="left:91.5px;top:55px;">4D <b class="z">00</b> 31 C1 48 83 C5 <b class="z">0</b>4 55 8B 55 <b class="z">00</b> 31 C2 89 55</div>
<div class="t by" style="left:428px;top:55px;">M.1ÁH.Å.U.U.1Â.U</div>
<div class="t ad" style="left:-29px;top:66px;"><b class="z">00000</b>17FBA45<b class="z">00</b>2<b class="z">0</b></div>
<div class="t by" style="left:91.5px;top:66px;"><b class="z">00</b> 31 D<b class="z">0</b> 48 83 C5 <b class="z">0</b>4 83 E9 <b class="z">0</b>4 31 D2 39 D1 74 <b class="z">0</b>2</div>
<div class="t by" style="left:428px;top:66px;">.1ÐH.Å..é.1Ò9Ñt.</div>
<div class="t ad" style="left:-29px;top:77px;"><b class="z">00000</b>17FBA45<b class="z">00</b>3<b class="z">0</b></div>
<div class="t by" style="left:91.5px;top:77px;">EB E7 58 FC 48 83 E4 F<b class="z">0</b> FF D<b class="z">0</b> E8 C8 FF FF FF 3B</div>
<div class="t by" style="left:428px;top:77px;">ëçXüH.äðÿÐèÈÿÿÿ;</div>
<div class="t ad" style="left:-29px;top:88px;"><b class="z">00000</b>17FBA45<b class="z">00</b>4<b class="z">0</b></div>
<div class="t by" style="left:91.5px;top:88px;">55 76 79 37 ED 72 79 AB C5 E6 E9 3B 55 76 79 AB</div>
<div class="t by" style="left:428px;top:88px;">Uvy7íry«Åæé;Uvy«</div>
<div class="t ad" style="left:-29px;top:99px;"><b class="z">00000</b>17FBA45<b class="z">00</b>5<b class="z">0</b></div>
<div class="t by" style="left:91.5px;top:99px;">18 2C 38 F9 4D 64 B1 1C <b class="z">0</b>5 E5 5D 3C <b class="z">0</b>5 E5 5D 74</div>
<div class="t by" style="left:428px;top:99px;">.,8ùMd±..å]&lt;.å]t</div>
<div class="t ad" style="left:-29px;top:110px;"><b class="z">00000</b>17FBA45<b class="z">00</b>6<b class="z">0</b></div>
<div class="t by" style="left:91.5px;top:110px;">88 F8 B7 8B 77 <b class="z">0</b>7 FF <b class="z">0</b>2 A8 4F 7E C1 B8 C1 7F C1</div>
<div class="t by" style="left:428px;top:110px;">.ø·.w.ÿ.¨O~Á¸Á.Á</div>
<div class="t ad" style="left:-29px;top:121px;"><b class="z">00000</b>17FBA45<b class="z">00</b>7<b class="z">0</b></div>
<div class="t by" style="left:91.5px;top:121px;">47 12 3E 79 B7 A7 9C 2F DF A3 9C 2F DF F9 D4 A6</div>
<div class="t by" style="left:428px;top:121px;">G.&gt;y·§./ß£./ßùÔ¦</div>
<div class="t ad" style="left:-29px;top:132px;"><b class="z">00000</b>17FBA45<b class="z">00</b>8<b class="z">0</b></div>
<div class="t by" style="left:91.5px;top:132px;">26 <b class="z">0</b>6 <b class="z">0</b>4 A6 26 <b class="z">0</b>6 <b class="z">0</b>4 A6 26 <b class="z">0</b>6 <b class="z">0</b>4 A6 D6 <b class="z">0</b>6 <b class="z">0</b>4 A6</div>
<div class="t by" style="left:428px;top:132px;">&amp;..¦&amp;..¦&amp;..¦Ö..¦</div>
<div class="t ad" style="left:-29px;top:143px;"><b class="z">00000</b>17FBA45<b class="z">00</b>9<b class="z">0</b></div>
<div class="t by" style="left:91.5px;top:143px;"><b class="z">0</b>A <b class="z">0</b>3 22 DA 92 82 78 92 4B F9 D7 A6 99 AB 6B 69</div>
<div class="t by" style="left:428px;top:143px;">.."Ú..x.Kù×¦.«ki</div>
<div class="t ad" style="left:-29px;top:154px;"><b class="z">00000</b>17FBA45<b class="z">00</b>A<b class="z">0</b></div>
<div class="t by" style="left:91.5px;top:154px;">79 D5 C9 A7 C<b class="z">0</b> <b class="z">0</b>E 9F <b class="z">0</b>8 CD 84 13 79 6A 48 1D 91</div>
<div class="t by" style="left:428px;top:154px;">yÕÉ§À...Í..yjH..</div>
<div class="t ad" style="left:-29px;top:165px;"><b class="z">00000</b>17FBA45<b class="z">00</b>B<b class="z">0</b></div>
<div class="t by" style="left:91.5px;top:165px;">DD D1 E5 C6 6D 7<b class="z">0</b> E2 A4 7C F<b class="z">0</b> C7 F7 D9 B7 3C <b class="z">0</b>A</div>
<div class="t by" style="left:428px;top:165px;">ÝÑåÆmpâ¤|ðÇ÷Ù·&lt;.</div>
<div class="t ad" style="left:-29px;top:176px;"><b class="z">00000</b>17FBA45<b class="z">00</b>C<b class="z">0</b></div>
<div class="t by" style="left:91.5px;top:176px;">FA 41 A4 <b class="z">0</b>F 77 F4 CE A3 84 E7 39 EC E1 48 <b class="z">0</b>E 1B</div>
<div class="t by" style="left:428px;top:176px;">úA¤.wôÎ£.ç9ìáH..</div>
<div class="t ad" style="left:-29px;top:187px;"><b class="z">00000</b>17FBA45<b class="z">00</b>D<b class="z">0</b></div>
<div class="t by" style="left:91.5px;top:187px;">F<b class="z">0</b> 11 5E CA DC 39 83 5B 2E 8F 97 <b class="z">0</b>6 A6 73 58 B5</div>
<div class="t by" style="left:428px;top:187px;">ð.^ÊÜ9.[....¦sXµ</div>
<div class="t ad" style="left:-29px;top:198px;"><b class="z">00000</b>17FBA45<b class="z">00</b>E<b class="z">0</b></div>
<div class="t by" style="left:91.5px;top:198px;">13 43 7E 16 97 97 BF FA D4 A7 A9 DB E7 95 A4 <b class="z">00</b></div>
<div class="t by" style="left:428px;top:198px;">.C~...¿úÔ§©Ûç.¤.</div>
<div class="t ad" style="left:-29px;top:209px;"><b class="z">00000</b>17FBA45<b class="z">00</b>F<b class="z">0</b></div>
<div class="t by" style="left:91.5px;top:209px;">14 23 F8 56 54 FF 5D 4C 46 5F A<b class="z">0</b> 7B FC 61 6A D1</div>
<div class="t by" style="left:428px;top:209px;">.#øVTÿ]LF_ {üajÑ</div>
<div class="t ad" style="left:-29px;top:220px;"><b class="z">00000</b>17FBA45<b class="z">0</b>1<b class="z">00</b></div>
<div class="t by" style="left:91.5px;top:220px;">FC 37 <b class="z">0</b>C 51 73 EE 5B 7B B5 C<b class="z">0</b> 17 <b class="z">0</b>A 2F 73 7E 8C</div>
<div class="t by" style="left:428px;top:220px;">ü7.Qsî[{µÀ../s~.</div>
<div class="t ad" style="left:-29px;top:231px;"><b class="z">00000</b>17FBA45<b class="z">0</b>11<b class="z">0</b></div>
<div class="t by" style="left:91.5px;top:231px;">66 4<b class="z">0</b> C4 B3 5E 9A 9B 1<b class="z">0</b> D7 76 8<b class="z">0</b> 48 7A FE DA E6</div>
<div class="t by" style="left:428px;top:231px;">f@Ä³^...×v.HzþÚæ</div>
<div class="t ad" style="left:-29px;top:242px;"><b class="z">00000</b>17FBA45<b class="z">0</b>12<b class="z">0</b></div>
<div class="t by" style="left:91.5px;top:242px;">E9 FA 76 54 19 8D E5 EA 1E 28 9C 77 86 76 D5 1A</div>
<div class="t by" style="left:428px;top:242px;">éúvT..åê.(.w.vÕ.</div>
<div class="t ad" style="left:-29px;top:253px;"><b class="z">00000</b>17FBA45<b class="z">0</b>13<b class="z">0</b></div>
<div class="t by" style="left:91.5px;top:253px;">E5 E5 DC 48 <b class="z">0</b>A 44 BE 1F 7F EF 1F E<b class="z">0</b> F8 1B E1 57</div>
<div class="t by" style="left:428px;top:253px;">ååÜH.D¾..ï.àø.áW</div>
<div class="t ad" style="left:-29px;top:264px;"><b class="z">00000</b>17FBA45<b class="z">0</b>14<b class="z">0</b></div>
<div class="t by" style="left:91.5px;top:264px;">B6 54 E1 57 D2 D2 E4 57 92 96 C1 <b class="z">0</b>F 92 96 C1 <b class="z">0</b>F</div>
<div class="t by" style="left:428px;top:264px;">¶TáWÒÒäW..Á...Á.</div>
<div class="t ad" style="left:-29px;top:275px;"><b class="z">00000</b>17FBA45<b class="z">0</b>15<b class="z">0</b></div>
<div class="t by" style="left:91.5px;top:275px;">D3 54 E1 57 92 96 C1 <b class="z">0</b>F 92 96 C1 <b class="z">0</b>F 33 12 4A 9B</div>
<div class="t by" style="left:428px;top:275px;">ÓTáW..Á...Á.3.J.</div>
<div class="r" style="left:931.5px;top:43px;width:10px;height:233px;background:#424242;border-radius:5px 5px 0 0;"></div>
<div class="r" style="left:931.5px;top:44px;width:10px;height:24px;background:#747474;border-radius:5px;"></div>
<svg class="r" style="left:931px;top:32px" width="11" height="9"><path d="M1 8L5.5 1L10 8Z" fill="#b0b0b0"/></svg>
</div>
<div class="p" style="left:948px;top:434px;width:568px;height:276px;">
<div class="r" style="left:0px;top:0px;width:1px;height:276px;background:#3a3a3a;"></div>
<div class="r" style="left:1px;top:0px;width:567px;height:11px;background:#3c3c3c;"></div>
<div class="r" style="left:120px;top:0px;width:1px;height:276px;background:#7c7c7c;"></div>
<div class="r" style="left:242px;top:0px;width:1px;height:276px;background:#7c7c7c;"></div>
<div class="t ad" style="left:5.5px;top:1px;color:#8fe25c;"><b class="z">000000</b>773AB9FA28</div>
<div class="t by" style="left:128.5px;top:1px;"><b class="z">0000</b>7FF7F3C92431</div>
<div class="t sk" style="left:247px;top:1px;"><span class="cj">返</span><span class="cj">回</span><span class="cj">到</span> shellcode_loader.<b class="z">0000</b>7FF7F3C92431 <span class="cj">自</span> ???</div>
<div class="t ad" style="left:5.5px;top:12px;"><b class="z">000000</b>773AB9FA3<b class="z">0</b></div>
<div class="t by" style="left:128.5px;top:12px;"><b class="z">000000</b>773AB9FAA<b class="z">0</b></div>
<div class="t by" style="left:247px;top:12px;">&amp;"<span class="cj">麳</span><span class="cj">冧</span><span class="cj">痣</span>3]<span class="cj">婨</span>"</div>
<div class="t ad" style="left:5.5px;top:23px;"><b class="z">000000</b>773AB9FA38</div>
<div class="t by" style="left:128.5px;top:23px;"><b class="z">0000000000000000</b></div>
<div class="t ad" style="left:5.5px;top:34px;"><b class="z">000000</b>773AB9FA4<b class="z">0</b></div>
<div class="t by" style="left:128.5px;top:34px;"><b class="z">0000000000000000</b></div>
<div class="t ad" style="left:5.5px;top:45px;"><b class="z">000000</b>773AB9FA48</div>
<div class="t by" style="left:128.5px;top:45px;"><b class="z">000000000000000</b>1</div>
<div class="t ad" style="left:5.5px;top:56px;"><b class="z">000000</b>773AB9FA5<b class="z">0</b></div>
<div class="t by" style="left:128.5px;top:56px;"><b class="z">0000000000000000</b></div>
<div class="t ad" style="left:5.5px;top:67px;"><b class="z">000000</b>773AB9FA58</div>
<div class="t by" style="left:128.5px;top:67px;"><b class="z">0000</b>7FF7F3C9276A</div>
<div class="t sk" style="left:247px;top:67px;"><span class="cj">返</span><span class="cj">回</span><span class="cj">到</span> shellcode_loader.<b class="z">0000</b>7FF7F3C9276A <span class="cj">自</span> shellcode_loader.<b class="z">0000</b>7FF7F3C9274<b class="z">0</b></div>
<div class="t ad" style="left:5.5px;top:78px;"><b class="z">000000</b>773AB9FA6<b class="z">0</b></div>
<div class="t by" style="left:128.5px;top:78px;">3127ED42<b class="z">0000000</b>A</div>
<div class="t ad" style="left:5.5px;top:89px;"><b class="z">000000</b>773AB9FA68</div>
<div class="t by" style="left:128.5px;top:89px;"><b class="z">0000000000000000</b></div>
<div class="t ad" style="left:5.5px;top:100px;"><b class="z">000000</b>773AB9FA7<b class="z">0</b></div>
<div class="t by" style="left:128.5px;top:100px;"><b class="z">0000000000000000</b></div>
<div class="t ad" style="left:5.5px;top:111px;"><b class="z">000000</b>773AB9FA78</div>
<div class="t by" style="left:128.5px;top:111px;"><b class="z">0000000000000000</b></div>
<div class="t ad" style="left:5.5px;top:122px;"><b class="z">000000</b>773AB9FA8<b class="z">0</b></div>
<div class="t by" style="left:128.5px;top:122px;"><b class="z">00000</b>17FBA5177B<b class="z">0</b></div>
<div class="t ad" style="left:5.5px;top:133px;"><b class="z">000000</b>773AB9FA88</div>
<div class="t by" style="left:128.5px;top:133px;"><b class="z">0000000000000000</b></div>
<div class="t ad" style="left:5.5px;top:144px;"><b class="z">000000</b>773AB9FA9<b class="z">0</b></div>
<div class="t by" style="left:128.5px;top:144px;"><b class="z">00000000000000</b>12</div>
<div class="t ad" style="left:5.5px;top:155px;"><b class="z">000000</b>773AB9FA98</div>
<div class="t by" style="left:128.5px;top:155px;"><b class="z">00000000000000</b>1F</div>
<div class="t ad" style="left:5.5px;top:166px;"><b class="z">000000</b>773AB9FAA<b class="z">0</b></div>
<div class="t by" style="left:128.5px;top:166px;"><b class="z">00000</b>17FBA51A42<b class="z">0</b></div>
<div class="t by" style="left:247px;top:166px;">"<span class="cj">麳</span><span class="cj">冧</span><span class="cj">痣</span>3]<span class="cj">婨</span>"</div>
<div class="t ad" style="left:5.5px;top:177px;"><b class="z">000000</b>773AB9FAA8</div>
<div class="t by" style="left:128.5px;top:177px;"><b class="z">00000</b>17FBA565C73</div>
<div class="t ad" style="left:5.5px;top:188px;"><b class="z">000000</b>773AB9FAB<b class="z">0</b></div>
<div class="t by" style="left:128.5px;top:188px;"><b class="z">00000</b>17FBA565C73</div>
<div class="t ad" style="left:5.5px;top:199px;"><b class="z">000000</b>773AB9FAB8</div>
<div class="t by" style="left:128.5px;top:199px;"><b class="z">00000</b>17FBA45<b class="z">0000</b></div>
<div class="t by" style="left:247px;top:199px;">"<span class="cj">麳</span><span class="cj">冧</span><span class="cj">痣</span>3]<span class="cj">婨</span>"</div>
<div class="t ad" style="left:5.5px;top:210px;"><b class="z">000000</b>773AB9FAC<b class="z">0</b></div>
<div class="t by" style="left:128.5px;top:210px;"><b class="z">0000</b>315<b class="z">0</b>D7FB5C3F</div>
<div class="t ad" style="left:5.5px;top:221px;"><b class="z">000000</b>773AB9FAC8</div>
<div class="t by" style="left:128.5px;top:221px;"><b class="z">0000</b>7FF7F3CBD3D8</div>
<div class="t by" style="left:247px;top:221px;">shellcode_loader.<b class="z">0000</b>7FF7F3CBD3D8</div>
<div class="t ad" style="left:5.5px;top:232px;"><b class="z">000000</b>773AB9FAD<b class="z">0</b></div>
<div class="t by" style="left:128.5px;top:232px;"><b class="z">00000</b>17FBA51793<b class="z">0</b></div>
<div class="t by" style="left:247px;top:232px;">&amp;"ALLUSERSPROFILE=C:\\ProgramData"</div>
<div class="t ad" style="left:5.5px;top:243px;"><b class="z">000000</b>773AB9FAD8</div>
<div class="t by" style="left:128.5px;top:243px;"><b class="z">0000</b>7FF7F3C9A21<b class="z">0</b></div>
<div class="t sk" style="left:247px;top:243px;"><span class="cj">返</span><span class="cj">回</span><span class="cj">到</span> shellcode_loader.<b class="z">0000</b>7FF7F3C9A21<b class="z">0</b> <span class="cj">自</span> shellcode_loader.<b class="z">0000</b>7FF7F3C9A1E<b class="z">0</b></div>
<div class="t ad" style="left:5.5px;top:254px;"><b class="z">000000</b>773AB9FAE<b class="z">0</b></div>
<div class="t by" style="left:128.5px;top:254px;"><b class="z">00000</b>17FBA51358<b class="z">0</b></div>
<div class="t by" style="left:247px;top:254px;">&amp;"C:\\Users\\os51\\Desktop\\d-powershell\\Shellcode_loader.exe"</div>
<div class="t ad" style="left:5.5px;top:265px;"><b class="z">000000</b>773AB9FAE8</div>
<div class="t by" style="left:128.5px;top:265px;"><b class="z">0000</b>7FF7F3C9A289</div>
<div class="t sk" style="left:247px;top:265px;"><span class="cj">返</span><span class="cj">回</span><span class="cj">到</span> shellcode_loader.<b class="z">0000</b>7FF7F3C9A289 <span class="cj">自</span> shellcode_loader.<b class="z">0000</b>7FF7F3C9A1B<b class="z">0</b></div>
<div class="t ad" style="left:5.5px;top:276px;"><b class="z">000000</b>773AB9FAF<b class="z">0</b></div>
<div class="t by" style="left:128.5px;top:276px;"><b class="z">0000000000000000</b></div>
<div class="r" style="left:122px;top:1.5px;width:2px;height:61.0px;background:#ff8c7c;"></div>
<div class="r" style="left:122px;top:1.5px;width:5px;height:2px;background:#ff8c7c;"></div>
<div class="r" style="left:122px;top:60.5px;width:5px;height:2px;background:#ff8c7c;"></div>
<div class="r" style="left:122px;top:67.5px;width:2px;height:171.0px;background:#ff8c7c;"></div>
<div class="r" style="left:122px;top:67.5px;width:5px;height:2px;background:#ff8c7c;"></div>
<div class="r" style="left:122px;top:236.5px;width:5px;height:2px;background:#ff8c7c;"></div>
<div class="r" style="left:122px;top:243.5px;width:2px;height:36.5px;background:#ff8c7c;"></div>
<div class="r" style="left:122px;top:243.5px;width:5px;height:2px;background:#ff8c7c;"></div>
</div>
</div></body></html>
